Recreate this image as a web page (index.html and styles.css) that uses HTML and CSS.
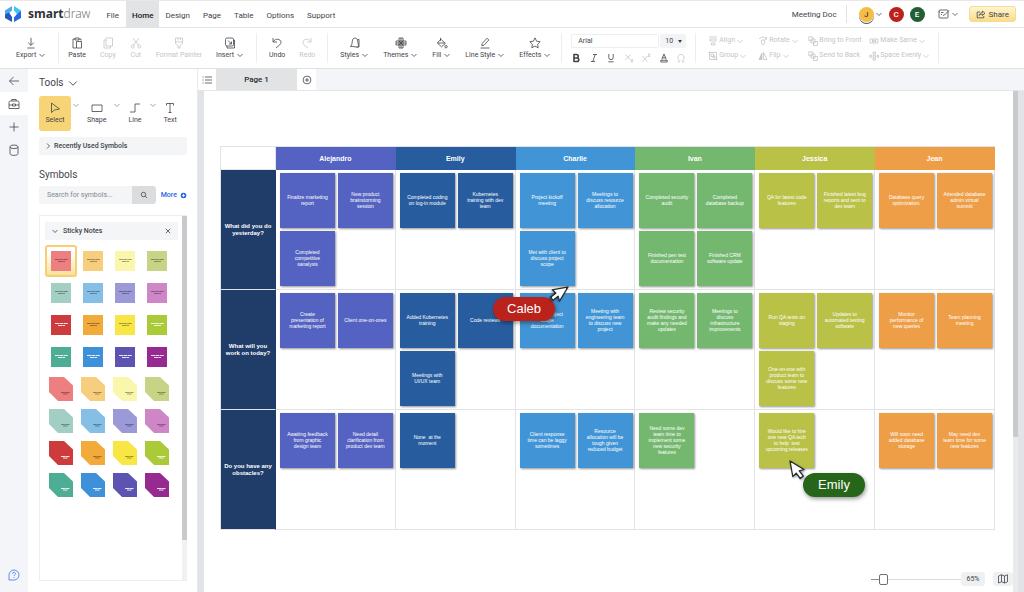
FILE: index.html
```html
<!DOCTYPE html>
<html lang="en">
<head>
<meta charset="utf-8">
<title>SmartDraw - Meeting Doc</title>
<link rel="stylesheet" href="styles.css">
</head>
<body>
<svg class="sprite" aria-hidden="true">
  <symbol id="caret" viewBox="0 0 8 8"><path d="M1.5 3 4 5.5 6.5 3"/></symbol>
  <symbol id="export" viewBox="0 0 12 12"><path d="M6 .8v7.4M3.2 5.6 6 8.4l2.800-2.800M2.400 11h7.200"/></symbol>
  <symbol id="paste" viewBox="0 0 12 12"><path d="M4 2H2v9h3M8 2h2v1.500M4 1h4v2H4zM5.500 4.500h5V11h-5z"/></symbol>
  <symbol id="copy" viewBox="0 0 12 12"><path d="M4 1h6.500v8H4zM4 3H2v8h6.500V9"/></symbol>
  <symbol id="cut" viewBox="0 0 12 12"><path d="M3 1l5.600 7.400M9 1 3.400 8.400"/><circle cx="2.800" cy="9.500" r="1.500"/><circle cx="9.200" cy="9.500" r="1.500"/></symbol>
  <symbol id="painter" viewBox="0 0 12 12"><path d="M2.500 1h7v5.500L7 8.500V11H5V8.500L2.500 6.500zM2.500 5h7M5 1v2.500M7.500 1v2"/></symbol>
  <symbol id="insert" viewBox="0 0 12 12"><rect x="1.500" y="1" width="8" height="8" rx="1.500"/><path d="M3 9v2h7.500V3H9.500M4 3.500 7.500 7M7.500 4.500V7H5"/></symbol>
  <symbol id="undo" viewBox="0 0 12 12"><path d="M2 1v4h4M2.300 4.700C4 1.200 9.800 1.500 10 5.300 10.100 7 8 8.500 5 11"/></symbol>
  <symbol id="redo" viewBox="0 0 12 12"><path d="M10 1v4H6M9.700 4.700C8 1.200 2.200 1.500 2 5.300 2 7.500 4 9 7 11"/></symbol>
  <symbol id="styles" viewBox="0 0 12 12"><path d="M4 9.500H1.500C3.500 7.500 3 5 3.500 3 4 .5 8 .5 8.500 3l1 5.500c.3 1.500-1 2-2.500 1.500L4 9.500zM7.500 10H10V2.500H8.500"/></symbol>
  <symbol id="themes" viewBox="0 0 12 12"><path d="M4 1h4v10H4zM1 4h10v4H1zM6 1v10M1 6h10M4 4l4 4M8 4 4 8"/></symbol>
  <symbol id="fill" viewBox="0 0 12 12"><path d="M4.500.8v3M5 2.200 9.300 6.500 5.500 9.800 1.300 5.800zM1.500 6h7.500"/><circle cx="10" cy="9.700" r="1.200"/></symbol>
  <symbol id="pen" viewBox="0 0 12 12"><path d="M3.200 6.500 8 1.200l1.800 1.800L5 8.200l-2.200.5zM1.500 11h9"/></symbol>
  <symbol id="star" viewBox="0 0 12 12"><path d="M6 .9l1.600 3.300 3.600.5-2.600 2.500.6 3.600L6 9.100l-3.200 1.700.6-3.600L.8 4.700l3.600-.5z"/></symbol>
  <symbol id="bold" viewBox="0 0 10 10"><path stroke-width="1.600" d="M3 1.500h2.500a1.700 1.700 0 0 1 0 3.500H3zM3 5h3a1.700 1.700 0 0 1 0 3.500H3z"/></symbol>
  <symbol id="italic" viewBox="0 0 10 10"><path d="M4 1.500h4M2 8.500h4M6.200 1.500 3.800 8.500"/></symbol>
  <symbol id="under" viewBox="0 0 10 10"><path d="M2.800 1v3.500a2.200 2.200 0 0 0 4.400 0V1M2.300 8.800h5.400"/></symbol>
  <symbol id="sub" viewBox="0 0 10 10"><path d="M1.500 1.500l5 5.500M6.500 1.500l-5 5.500M7.200 6.500h1.500v1.200H7.200v1.300h2"/></symbol>
  <symbol id="sup" viewBox="0 0 10 10"><path d="M1.500 3l5 5.500M6.500 3l-5 5.500M7.200 1h1.500v1.200H7.200v1.300h2"/></symbol>
  <symbol id="color" viewBox="0 0 10 10"><path d="M2.800 6.500 5 1l2.200 5.500M3.500 4.800h3M1.800 7.300h6.400v1.700H1.800z"/></symbol>
  <symbol id="omega" viewBox="0 0 10 10"><path d="M1.500 8.800h2.200V7.500a3.200 3.200 0 1 1 2.600 0v1.300h2.200"/></symbol>
  <symbol id="align" viewBox="0 0 10 10"><path d="M1 1h8M2 3h6v2H2zM3.500 7h3.500v2H3.500z"/></symbol>
  <symbol id="group" viewBox="0 0 10 10"><path d="M1.500 1.500h7v7h-7zM.5 1.500h2M1.500.5v2M7.500 8.500h2M8.500 7.500v2M3 3h2.500v2.500H3zM5 5h2v2H5z"/></symbol>
  <symbol id="rotate" viewBox="0 0 10 10"><path d="M1 3c2-2.500 6-2.500 7.500 0M8.500 1v2.200H6.500M3.500 4h3v3.500L5 9 3.500 7.500z"/></symbol>
  <symbol id="flip" viewBox="0 0 10 10"><path d="M5.500 1.500v7H9z"/><path class="solid" d="M4 2v6.500H1z"/></symbol>
  <symbol id="layers" viewBox="0 0 10 10"><path d="M.8.8h4v4h-4zM5.500 5.500h4v4h-4z"/><path d="M3 3h4v4H3z"/></symbol>
  <symbol id="same" viewBox="0 0 10 10"><path d="M1 3h2.500v4H1zM6.500 3H9v4H6.500zM5 1.500v7M3.500 5h3"/></symbol>
  <symbol id="space" viewBox="0 0 10 10"><path d="M4 1h2.500v2H4zM4 4.200h2.500v2H4zM4 7.200h2.500v2H4zM.5 4.200h2v2h-2zM8 4.200h1.500v2H8z"/></symbol>
  <symbol id="back" viewBox="0 0 14 14"><path d="M12 7H2.500M6.500 3 2.500 7l4 4"/></symbol>
  <symbol id="toolbox" viewBox="0 0 14 14"><path d="M2 5.500Q2 4 3.500 4h7Q12 4 12 5.500V11.500H2zM4.800 4V2.500h4.400V4M2 8h3.500M8.500 8H12M5.500 7h3v2h-3z"/></symbol>
  <symbol id="plus" viewBox="0 0 14 14"><path d="M7 2.500v9M2.500 7h9"/></symbol>
  <symbol id="data" viewBox="0 0 14 14"><ellipse cx="7" cy="3.800" rx="4" ry="1.800"/><path d="M3 3.800v6.700c0 2.500 8 2.500 8 0V3.800"/></symbol>
  <symbol id="help" viewBox="0 0 14 14"><path d="M2 12V7a5 5 0 1 1 5 5zM5.500 5.700C5.500 3.700 8.600 3.900 8.500 5.700 8.500 6.700 7 6.700 7 8M7 9v.900"/></symbol>
  <symbol id="select" viewBox="0 0 12 12"><path d="M2.500 1v9.500L5.500 8l5-1z"/></symbol>
  <symbol id="shape" viewBox="0 0 12 12"><path d="M1 3h10v6.500H1z"/></symbol>
  <symbol id="line" viewBox="0 0 12 12"><path d="M1 10h5V2h5"/></symbol>
  <symbol id="text" viewBox="0 0 12 12"><path d="M2.500 3.500v-2h7v2M6 1.500v9M4.500 10.500h3"/></symbol>
  <symbol id="search" viewBox="0 0 8 8"><circle cx="3.500" cy="3.500" r="2.200"/><path d="M5.200 5.200 7 7"/></symbol>
  <symbol id="close" viewBox="0 0 8 8"><path d="M1.800 1.800l4.400 4.400M6.200 1.800 1.800 6.200"/></symbol>
  <symbol id="list" viewBox="0 0 12 12"><path d="M4 3h7M4 6h7M4 9h7M1.500 3h1M1.500 6h1M1.500 9h1"/></symbol>
  <symbol id="add" viewBox="0 0 10 10"><circle cx="5" cy="5" r="3.900"/><path d="M5 3v4M3 5h4"/></symbol>
  <symbol id="map" viewBox="0 0 12 12"><path d="M1.500 3 4.500 1.800 7.500 3l3-1.200v7L7.500 10 4.500 8.800 1.500 10zM4.500 1.800v7M7.500 3v7"/></symbol>
  <symbol id="board" viewBox="0 0 12 12"><rect x="1" y="2" width="9" height="8" rx="1"/><path d="M3 4.500h2.500M5 7.500l1.500-.5L11 2.500M3 6.500h1M1 4h1"/></symbol>
  <symbol id="share" viewBox="0 0 10 10"><path d="M4 3H1.200v5.800h6.600V7M3.200 6.500C3.500 4.500 5 3.700 6.300 3.700V2L9 4.300 6.300 6.500V5C5 5 4 5.500 3.200 6.500z"/></symbol>
  <symbol id="note" viewBox="0 0 24 24"><path class="paper" d="M2 2h20v20H2z"/><path class="ink" d="M6 10.500h13M9 12.500h7"/></symbol>
  <symbol id="fold" viewBox="0 0 24 24"><path class="paper" d="M0 0h15l9 8.500V24H9l-9-9z"/><path class="ink" d="M12 15.500h9M14 17h5"/></symbol>
  <symbol id="pointer" viewBox="0 0 18 20"><path class="arrow" d="M1 1l14 8.500-4.800 1.400 4 5-3 2.600-4-5.400-3.400 3.400z"/></symbol>
</svg>

<header class="menubar">
  <a class="brand" href="#">
    <svg class="mark" viewBox="0 0 18 18" aria-hidden="true">
      <path fill="#4aa9f0" d="M8 1v4.500L5 8v4L1 9.500V5.500z"/><path fill="#2459b8" d="M1 9.500 5 7.500 8 12v5L1 13z"/>
      <path fill="#3bc4f6" d="M10 1v4.500L13 9l4-2V5.500z"/><path fill="#2767e0" d="M17 6v7l-7 4v-4.500L13 9z"/>
    </svg>
    <span class="word"><b>smart</b>draw</span>
  </a>
  <nav class="menus">
    <a href="#">File</a><a href="#" class="current">Home</a><a href="#">Design</a><a href="#">Page</a><a href="#">Table</a><a href="#">Options</a><a href="#">Support</a>
  </nav>
  <span class="doc-name">Meeting Doc</span>
  <div class="people">
    <span class="avatar self">J</span><svg class="icon s8"><use href="#caret"/></svg>
    <span class="avatar red">C</span><span class="avatar green">E</span>
  </div>
  <button class="present" aria-label="Present"><svg class="icon s12"><use href="#board"/></svg><svg class="icon s8"><use href="#caret"/></svg></button>
  <button class="share"><svg class="icon s10"><use href="#share"/></svg>Share</button>
</header>

<div class="toolbar">
  <div class="tb-group">
    <button class="tb"><svg class="icon s12"><use href="#export"/></svg><span>Export <svg class="icon s8"><use href="#caret"/></svg></span></button>
  </div>
  <div class="tb-group clipboard">
    <button class="tb"><svg class="icon s12"><use href="#paste"/></svg><span>Paste</span></button>
    <button class="tb" disabled><svg class="icon s12"><use href="#copy"/></svg><span>Copy</span></button>
    <button class="tb" disabled><svg class="icon s12"><use href="#cut"/></svg><span>Cut</span></button>
    <button class="tb" disabled><svg class="icon s12"><use href="#painter"/></svg><span>Format Painter</span></button>
    <button class="tb"><svg class="icon s12"><use href="#insert"/></svg><span>Insert <svg class="icon s8"><use href="#caret"/></svg></span></button>
  </div>
  <div class="tb-group">
    <button class="tb"><svg class="icon s12"><use href="#undo"/></svg><span>Undo</span></button>
    <button class="tb" disabled><svg class="icon s12"><use href="#redo"/></svg><span>Redo</span></button>
  </div>
  <div class="tb-group look">
    <button class="tb"><svg class="icon s12"><use href="#styles"/></svg><span>Styles <svg class="icon s8"><use href="#caret"/></svg></span></button>
    <button class="tb"><svg class="icon s12"><use href="#themes"/></svg><span>Themes <svg class="icon s8"><use href="#caret"/></svg></span></button>
    <button class="tb"><svg class="icon s12"><use href="#fill"/></svg><span>Fill <svg class="icon s8"><use href="#caret"/></svg></span></button>
    <button class="tb"><svg class="icon s12"><use href="#pen"/></svg><span>Line Style <svg class="icon s8"><use href="#caret"/></svg></span></button>
    <button class="tb"><svg class="icon s12"><use href="#star"/></svg><span>Effects <svg class="icon s8"><use href="#caret"/></svg></span></button>
  </div>
  <div class="tb-group font-group">
    <div class="font-row">
      <input class="font-name" aria-label="Font" value="Arial">
      <span class="font-size"><select aria-label="Font size"><option>10</option></select><i></i></span>
    </div>
    <div class="format-row">
      <button aria-label="Bold"><svg class="icon s10"><use href="#bold"/></svg></button>
      <button aria-label="Italic"><svg class="icon s10"><use href="#italic"/></svg></button>
      <button aria-label="Underline"><svg class="icon s10"><use href="#under"/></svg></button>
      <button aria-label="Subscript" disabled><svg class="icon s10"><use href="#sub"/></svg></button>
      <button aria-label="Superscript" disabled><svg class="icon s10"><use href="#sup"/></svg></button>
      <button aria-label="Text color"><svg class="icon s10"><use href="#color"/></svg></button>
      <button aria-label="Symbol" disabled><svg class="icon s10"><use href="#omega"/></svg></button>
    </div>
  </div>
  <div class="tb-group arrange">
    <button disabled><svg class="icon s10"><use href="#align"/></svg>Align <svg class="icon s8"><use href="#caret"/></svg></button>
    <button disabled><svg class="icon s10"><use href="#rotate"/></svg>Rotate <svg class="icon s8"><use href="#caret"/></svg></button>
    <button disabled><svg class="icon s10"><use href="#layers"/></svg>Bring to Front</button>
    <button disabled><svg class="icon s10"><use href="#same"/></svg>Make Same <svg class="icon s8"><use href="#caret"/></svg></button>
    <button disabled><svg class="icon s10"><use href="#group"/></svg>Group <svg class="icon s8"><use href="#caret"/></svg></button>
    <button disabled><svg class="icon s10"><use href="#flip"/></svg>Flip <svg class="icon s8"><use href="#caret"/></svg></button>
    <button disabled><svg class="icon s10"><use href="#layers"/></svg>Send to Back</button>
    <button disabled><svg class="icon s10"><use href="#space"/></svg>Space Evenly <svg class="icon s8"><use href="#caret"/></svg></button>
  </div>
</div>

<div class="workspace">
  <nav class="rail">
    <button aria-label="Back"><svg class="icon s14"><use href="#back"/></svg></button>
    <button aria-label="Tools" class="on"><svg class="icon s14"><use href="#toolbox"/></svg></button>
    <button aria-label="Add"><svg class="icon s14"><use href="#plus"/></svg></button>
    <button aria-label="Data"><svg class="icon s14"><use href="#data"/></svg></button>
    <button aria-label="Help" class="help"><svg class="icon s14"><use href="#help"/></svg></button>
  </nav>

  <aside class="panel">
    <h2>Tools <svg class="icon s12"><use href="#caret"/></svg></h2>
    <div class="tools">
      <button class="tool on"><svg class="icon s12"><use href="#select"/></svg>Select</button><svg class="icon s8"><use href="#caret"/></svg>
      <button class="tool"><svg class="icon s12"><use href="#shape"/></svg>Shape</button><svg class="icon s8"><use href="#caret"/></svg>
      <button class="tool"><svg class="icon s12"><use href="#line"/></svg>Line</button><svg class="icon s8"><use href="#caret"/></svg>
      <button class="tool"><svg class="icon s12"><use href="#text"/></svg>Text</button>
    </div>
    <button class="recent"><svg class="icon s8 right"><use href="#caret"/></svg>Recently Used Symbols</button>
    <h2>Symbols</h2>
    <div class="search">
      <input type="search" aria-label="Search for symbols" placeholder="Search for symbols...">
      <button class="go" aria-label="Search"><svg class="icon s8"><use href="#search"/></svg></button>
      <a href="#">More <svg class="more-dot" viewBox="0 0 8 8" aria-hidden="true"><circle cx="4" cy="4" r="3.200"/><path d="M4 2.200v3.600M2.200 4h3.600"/></svg></a>
    </div>
    <div class="library">
      <div class="library-body">
        <div class="library-head"><svg class="icon s8"><use href="#caret"/></svg><span>Sticky Notes</span><button aria-label="Close"><svg class="icon s8"><use href="#close"/></svg></button></div>
        <div class="swatches">
          <button class="c1 on" aria-label="Coral note"><svg><use href="#note"/></svg></button><button class="c2" aria-label="Apricot note"><svg><use href="#note"/></svg></button><button class="c3" aria-label="Cream note"><svg><use href="#note"/></svg></button><button class="c4" aria-label="Sage note"><svg><use href="#note"/></svg></button>
          <button class="c5" aria-label="Mint note"><svg><use href="#note"/></svg></button><button class="c6" aria-label="Sky note"><svg><use href="#note"/></svg></button><button class="c7" aria-label="Lavender note"><svg><use href="#note"/></svg></button><button class="c8" aria-label="Orchid note"><svg><use href="#note"/></svg></button>
          <button class="c9" aria-label="Red note"><svg><use href="#note"/></svg></button><button class="c10" aria-label="Orange note"><svg><use href="#note"/></svg></button><button class="c11" aria-label="Yellow note"><svg><use href="#note"/></svg></button><button class="c12" aria-label="Lime note"><svg><use href="#note"/></svg></button>
          <button class="c13" aria-label="Teal note"><svg><use href="#note"/></svg></button><button class="c14" aria-label="Blue note"><svg><use href="#note"/></svg></button><button class="c15" aria-label="Indigo note"><svg><use href="#note"/></svg></button><button class="c16" aria-label="Purple note"><svg><use href="#note"/></svg></button>
          <button class="c1" aria-label="Coral folded note"><svg><use href="#fold"/></svg></button><button class="c2" aria-label="Apricot folded note"><svg><use href="#fold"/></svg></button><button class="c3" aria-label="Cream folded note"><svg><use href="#fold"/></svg></button><button class="c4" aria-label="Sage folded note"><svg><use href="#fold"/></svg></button>
          <button class="c5" aria-label="Mint folded note"><svg><use href="#fold"/></svg></button><button class="c6" aria-label="Sky folded note"><svg><use href="#fold"/></svg></button><button class="c7" aria-label="Lavender folded note"><svg><use href="#fold"/></svg></button><button class="c8" aria-label="Orchid folded note"><svg><use href="#fold"/></svg></button>
          <button class="c9" aria-label="Red folded note"><svg><use href="#fold"/></svg></button><button class="c10" aria-label="Orange folded note"><svg><use href="#fold"/></svg></button><button class="c11" aria-label="Yellow folded note"><svg><use href="#fold"/></svg></button><button class="c12" aria-label="Lime folded note"><svg><use href="#fold"/></svg></button>
          <button class="c13" aria-label="Teal folded note"><svg><use href="#fold"/></svg></button><button class="c14" aria-label="Blue folded note"><svg><use href="#fold"/></svg></button><button class="c15" aria-label="Indigo folded note"><svg><use href="#fold"/></svg></button><button class="c16" aria-label="Purple folded note"><svg><use href="#fold"/></svg></button>
        </div>
      </div>
      <div class="track"><div class="thumb"></div></div>
    </div>
  </aside>

  <main class="stage">
    <div class="tabs">
      <button class="list" aria-label="Pages"><svg class="icon s12"><use href="#list"/></svg></button>
      <button class="tab">Page 1</button>
      <button class="new" aria-label="Add page"><svg class="icon s10"><use href="#add"/></svg></button>
    </div>
    <div class="view">
      <div class="gutter"></div>
      <div class="canvas">
        <table class="board">
          <thead>
            <tr><td></td><th class="alejandro">Alejandro</th><th class="emily">Emily</th><th class="charlie">Charlie</th><th class="ivan">Ivan</th><th class="jessica">Jessica</th><th class="jean">Jean</th></tr>
          </thead>
          <tbody>
            <tr>
              <th>What did you do<br>yesterday?</th>
              <td class="alejandro"><div class="notes"><p>Finalize marketing<br>report</p><p>New product<br>brainstorming<br>session</p><p>Completed<br>competitive<br>sanalysis</p></div></td>
              <td class="emily"><div class="notes"><p>Completed coding<br>on log-in module</p><p>Kubernetes<br>training with dev<br>team</p></div></td>
              <td class="charlie"><div class="notes"><p>Project kickoff<br>meeting</p><p>Meetings to<br>discuss resource<br>allocation</p><p>Met with client to<br>discuss project<br>scope</p></div></td>
              <td class="ivan"><div class="notes"><p>Completed security<br>audit</p><p>Completed<br>database backup</p><p>Finished pen test<br>documentation</p><p>Finished CRM<br>software update</p></div></td>
              <td class="jessica"><div class="notes"><p>QA for latest code<br>features</p><p>Finished latest bug<br>reports and sent to<br>dev team</p></div></td>
              <td class="jean"><div class="notes"><p>Database query<br>optimization.</p><p>Attended database<br>admin virtual<br>summit</p></div></td>
            </tr>
            <tr>
              <th>What will you<br>work on today?</th>
              <td class="alejandro"><div class="notes"><p>Create<br>presentation of<br>marketing report</p><p>Client one-on-ones</p></div></td>
              <td class="emily"><div class="notes"><p>Added Kubernetes<br>training</p><p>Code reviews</p><p>Meetings with<br>UI/UX team</p></div></td>
              <td class="charlie"><div class="notes"><p>Create project<br>scope<br>documentation</p><p>Meeting with<br>engineering team<br>to discuss new<br>project</p></div></td>
              <td class="ivan"><div class="notes"><p>Review security<br>audit findings and<br>make any needed<br>updates</p><p>Meetings to<br>discuss<br>infrastructure<br>improvements</p></div></td>
              <td class="jessica"><div class="notes"><p>Run QA tests on<br>staging</p><p>Updates to<br>automated testing<br>software</p><p>One-on-one with<br>product team to<br>discuss some new<br>features</p></div></td>
              <td class="jean"><div class="notes"><p>Monitor<br>performance of<br>new queries</p><p>Team planning<br>meeting</p></div></td>
            </tr>
            <tr>
              <th>Do you have any<br>obstacles?</th>
              <td class="alejandro"><div class="notes"><p>Awaiting feedback<br>from graphic<br>design team</p><p>Need detail<br>clarification from<br>product dev team</p></div></td>
              <td class="emily"><div class="notes"><p>None&nbsp; at the<br>moment</p></div></td>
              <td class="charlie"><div class="notes"><p>Client response<br>time can be laggy<br>sometimes</p><p>Resource<br>allocation will be<br>tough given<br>reduced budget</p></div></td>
              <td class="ivan"><div class="notes"><p>Need some dev<br>team time to<br>implement some<br>new security<br>features</p></div></td>
              <td class="jessica"><div class="notes"><p>Would like to hire<br>one new QA tech<br>to help&nbsp; test<br>upcoming releases</p></div></td>
              <td class="jean"><div class="notes"><p>Will soon need<br>added database<br>storage</p><p>May need dev<br>team time for some<br>new features</p></div></td>
            </tr>
          </tbody>
        </table>
        <span class="who caleb">Caleb</span><svg class="pointer caleb-pointer"><use href="#pointer"/></svg>
        <svg class="pointer emily-pointer"><use href="#pointer"/></svg><span class="who em">Emily</span>
        <div class="zoombar">
          <input type="range" aria-label="Zoom" min="0" max="100" value="10">
          <output>65%</output>
          <button aria-label="Overview map"><svg class="icon s12"><use href="#map"/></svg></button>
        </div>
      </div>
      <div class="track"><div class="thumb"></div></div>
      <div class="gutter edge"></div>
    </div>
  </main>
</div>
</body>
</html>
```

FILE: styles.css
```css
* { box-sizing: border-box; }
body {
  margin: 0;
  height: 100vh;
  display: flex;
  flex-direction: column;
  overflow: hidden;
  background: #fff;
  color: #3f444a;
  font: 7px/9px Roboto, "Noto Sans", sans-serif;
}
button, input, select { font: inherit; color: inherit; border: 0; padding: 0; margin: 0; background: none; outline: 0; }
button { display: flex; align-items: center; justify-content: center; }
a { color: inherit; text-decoration: none; }
h2 { margin: 0; font-size: 10px; line-height: 12px; font-weight: 400; display: flex; align-items: center; gap: 4px; }
h2 .icon { stroke-width: 0.6; }
.sprite { position: absolute; width: 0; height: 0; }
.icon { flex: none; fill: none; stroke: currentColor; stroke-width: 0.8; stroke-linejoin: round; }
.s8 { width: 8px; height: 8px; }
.s10 { width: 10px; height: 10px; }
.s12 { width: 12px; height: 12px; }
.s14 { width: 14px; height: 14px; }
.solid { fill: currentColor; }
.right { transform: rotate(-90deg); }

/* Menu bar */
.menubar { flex: none; display: flex; align-items: center; height: 28px; padding: 0 8px 0 4px; border-top: 1px solid #e8e8e8; border-bottom: 1px solid #e2e3e4; }
.brand { display: flex; align-items: center; gap: 6px; margin-right: 10px; }
.mark { width: 18px; height: 18px; }
.word { font: 300 12px/16px "Noto Sans", sans-serif; color: #777; }
.word b { font-weight: 700; color: #2f3338; }
.menus { display: flex; align-self: stretch; font-size: 8px; }
.menus a { display: flex; align-items: center; padding: 2px 7px 0 6px; }
.menus .current { background: #e1e3e5; color: #17191c; font-weight: 500; padding: 2px 6px 0; }
.doc-name { margin-left: auto; font-size: 8px; padding-right: 9px; }
.people { display: flex; align-items: center; gap: 6px; padding-left: 12px; height: 18px; border-left: 1px solid #e2e3e4; }
.people .icon { margin-left: -5px; }
.avatar { width: 15px; height: 15px; border-radius: 50%; color: #fff; font-weight: 500; font-size: 8px; line-height: 15px; text-align: center; }
.self { background: #f6bd46; color: #3c4147; box-shadow: 0 1px 0 #fff, 0 2px 0 #4a4f5e; }
.red { background: #bd211c; }
.green { background: #225f35; }
.present { margin-left: 13px; gap: 1px; }
.share { margin-left: 10px; height: 16px; padding: 0 6px; gap: 3px; font-size: 8px; border: 1px solid #f3dc95; border-radius: 3px; background: linear-gradient(#fff5d2, #fbdd86); }

/* Toolbar */
.toolbar { flex: none; display: flex; align-items: center; height: 41px; padding-left: 4px; border-bottom: 1px solid #dfe1e3; }
.tb-group { display: flex; align-items: center; gap: 14px; height: 30px; padding: 0 12px; border-right: 1px solid #eceded; }
.clipboard { padding: 0 12px 0 9px; }
.look { padding-right: 10px; }
.tb { flex-direction: column; gap: 2px; }
.tb span { display: flex; align-items: center; gap: 2px; white-space: nowrap; }
button:disabled { color: #c3c5c8; }
.font-group { flex-direction: column; align-items: stretch; gap: 5px; padding: 1px 9px 0; }
.font-row { display: flex; gap: 1px; }
.font-name { width: 88px; height: 14px; padding: 0 6px; border: 1px solid #eceef0; border-radius: 2px; }
.font-size { position: relative; display: flex; align-items: center; width: 26px; height: 14px; background: #f1f3f5; border-radius: 2px; }
.font-size select { appearance: none; width: 100%; padding-left: 5px; font-size: 7px; line-height: 10px; }
.font-size i { position: absolute; right: 4px; border: 2px solid transparent; border-top: 3px solid #3c4147; border-bottom: 0; }
.format-row { display: flex; justify-content: space-between; }
.arrange { display: grid; grid-template-columns: 50px 50px 61px auto; align-content: center; gap: 5px 0; padding-right: 8px; }
.arrange button { justify-content: flex-start; gap: 1px; white-space: nowrap; }

/* Workspace */
.workspace { flex: 1; min-height: 0; display: flex; }
.rail { flex: none; width: 28px; display: flex; flex-direction: column; background: #f3f5f8; }
.rail button { height: 23px; }
.rail .on { background: #fff; }
.rail .help { margin-top: auto; margin-bottom: 6px; color: #3d74f0; }

/* Symbol panel */
.panel { flex: none; width: 170px; display: flex; flex-direction: column; padding: 8px 10px 11px 11px; border-right: 1px solid #e8eaec; }
.tools { display: flex; align-items: flex-start; gap: 7px; margin: 7px 0 6px; }
.tools > .icon { margin-top: 5px; color: #8a8e93; }
.tool { flex-direction: column; gap: 2px; height: 35px; border-radius: 3px; }
.tool.on { width: 32px; margin-right: -6px; background: #f7d576; }
.recent { justify-content: flex-start; gap: 2px; height: 18px; padding: 0 5px; margin-bottom: 14px; background: #f3f5f7; border-radius: 2px; font-weight: 500; }
.search { display: flex; align-items: center; height: 18px; margin: 5px 0 11px; }
.search input { flex: 1; min-width: 0; height: 18px; padding: 0 8px; background: #f3f5f7; border-radius: 2px 0 0 2px; }
.search input::placeholder { color: #85898e; opacity: 1; }
.go { width: 24px; height: 18px; background: #dadcdd; border-radius: 0 3px 3px 0; }
.search a { display: flex; align-items: center; gap: 3px; margin-left: 5px; color: #2563eb; font-weight: 500; }
.more-dot { width: 7px; height: 7px; }
.more-dot circle { fill: #2563eb; }
.more-dot path { stroke: #fff; stroke-width: 1; }
.library { flex: 1; display: flex; border: 1px solid #eceef0; border-right: 0; }
.library-body { flex: 1; padding: 6px 4px 6px 5px; }
.library-head { display: flex; align-items: center; gap: 4px; height: 18px; padding: 0 6px; margin-bottom: 5px; background: #f3f5f7; font-weight: 500; }
.library-head button { margin-left: auto; }
.swatches { display: grid; grid-template-columns: repeat(4, 32px); grid-auto-rows: 32px; }
.swatches button { --ink: #00000059; color: var(--paper); border: 1px solid transparent; border-radius: 3px; }
.swatches .on { border: 2px solid #f6cf74; background: linear-gradient(#fff 20%, #fae09a); }
.swatches svg { flex: none; width: 24px; height: 24px; }
.paper { fill: currentColor; }
.ink { stroke: var(--ink); stroke-width: 1; stroke-dasharray: 4 0.4; }
.c1 { --paper: #ed7f80; } .c2 { --paper: #f7cd7e; } .c3 { --paper: #faf6ac; } .c4 { --paper: #c8d485; }
.c5 { --paper: #a2cec4; } .c6 { --paper: #86bfe5; } .c7 { --paper: #9b99d8; } .c8 { --paper: #ce86c7; }
.c9 { --paper: #ce3b3d; } .c10 { --paper: #f2aa3a; } .c11 { --paper: #f8e644; } .c12 { --paper: #abca38; }
.c13 { --paper: #4dad95; } .c14 { --paper: #3e91d9; } .c15 { --paper: #5c54b0; } .c16 { --paper: #962a90; }
.swatches :is(.c9, .c12, .c13, .c14, .c15, .c16) { --ink: #ffffffd9; }
.track { flex: none; width: 5px; background: #f0f1f2; }
.thumb { background: #c9cacb; }
.library .thumb { height: 89%; }

/* Page tabs */
.stage { flex: 1; min-width: 0; display: flex; flex-direction: column; }
.tabs { flex: none; display: flex; height: 22px; background: #f3f5f8; border-bottom: 1px solid #e4e6e8; }
.tabs .list { width: 18px; background: #fff; }
.tabs .tab { width: 81px; background: #e1e3e5; font-size: 8px; font-weight: 500; color: #26292d; }
.tabs .new { width: 19px; background: #fff; }

/* Canvas */
.view { flex: 1; min-height: 0; display: flex; }
.gutter { flex: none; width: 6px; background: #e1e3e6; }
.view .track { background: #e9eaec; }
.view .thumb { height: 69%; }
.canvas { position: relative; flex: 1; min-width: 0; display: flex; flex-direction: column; padding: 55px 0 6px 16px; }
.board { width: calc(100% - 18px); table-layout: fixed; border-collapse: separate; border-spacing: 0; font-family: "Liberation Sans", Arial, sans-serif; color: #fff; border-top: 1px solid #e2e3e5; }
.board th, .board td { padding: 0; border-right: 1px solid #e2e3e5; border-bottom: 1px solid #e2e3e5; vertical-align: top; }
.board tr > :first-child { width: 56px; border-left: 1px solid #e2e3e5; }
.board thead th { height: 23px; vertical-align: middle; font-size: 7px; background: var(--tone); border-color: var(--tone); }
.board tbody th { height: 120px; vertical-align: middle; font-size: 6px; line-height: 7px; background: #203c68; border-right-color: #203c68; }
.board tbody td { padding: 3px 2px 3px 4px; }
.notes { display: grid; grid-template-columns: 1fr 1fr; gap: 3px; }
.notes p { margin: 0; aspect-ratio: 1; display: flex; align-items: center; justify-content: center; text-align: center; white-space: nowrap; font-size: 5px; line-height: 6px; background: var(--tone); box-shadow: 1px 1px 2px #0000006b; }
.alejandro { --tone: #5463c1; }
.emily { --tone: #275d9f; }
.charlie { --tone: #4195d6; }
.ivan { --tone: #74b870; }
.jessica { --tone: #b9c147; }
.jean { --tone: #ed9e47; }

/* Live collaborators */
.who { position: absolute; width: 62px; height: 24px; border-radius: 12px; color: #fff; font: 13px/24px "Liberation Sans", Arial, sans-serif; text-align: center; box-shadow: 1px 2px 4px #00000066; }
.caleb { left: 289px; top: 206px; background: #b9231c; }
.em { left: 599px; top: 382px; background: #27651a; }
.pointer { position: absolute; width: 18px; height: 20px; filter: drop-shadow(1px 1px 1px #0006); }
.arrow { fill: #fff; stroke: #26292d; stroke-width: 1.3; stroke-linejoin: round; }
.caleb-pointer { left: 346px; top: 194px; transform: rotate(90deg); }
.emily-pointer { left: 585px; top: 369px; }

/* Zoom controls */
.zoombar { display: flex; align-items: center; justify-content: flex-end; margin-top: auto; }
.zoombar input { appearance: none; width: 90px; height: 12px; background: linear-gradient(90deg, #8d9196 10%, #d9dbdd 10%) center / 100% 1px no-repeat; }
.zoombar input::-webkit-slider-thumb { appearance: none; width: 9px; height: 11px; background: #fff; border: 1px solid #6d7176; border-radius: 2px; }
.zoombar output { width: 24px; height: 14px; line-height: 14px; text-align: center; background: #eff0f1; border-radius: 3px; margin-right: 8px; }
.zoombar button { width: 20px; height: 14px; background: #eff0f1; border-radius: 3px; }
```
